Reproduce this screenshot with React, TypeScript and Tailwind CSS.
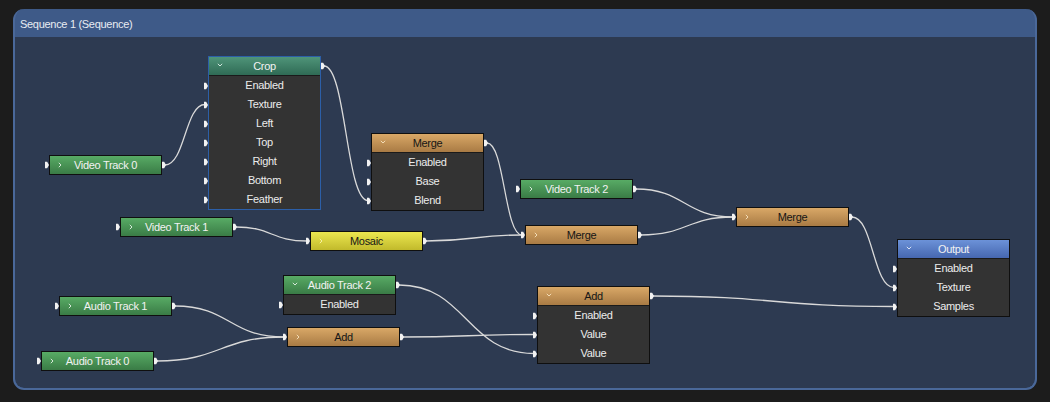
import React from 'react';

type Kind = 'green' | 'orange' | 'yellow' | 'teal' | 'blue';

interface GraphNode {
  id: string;
  title: string;
  kind: Kind;
  x: number;
  y: number;
  rows?: string[];
  noOutput?: boolean;
  selected?: boolean;
}

// canvas origin in page coords (inside the panel body)
const ORIGIN = { x: 15, y: 37 };
const NODE_W = 113;

const NODES: GraphNode[] = [
  { id: 'crop', title: 'Crop', kind: 'teal', x: 208, y: 56, rows: ['Enabled', 'Texture', 'Left', 'Top', 'Right', 'Bottom', 'Feather'], selected: true },
  { id: 'vt0', title: 'Video Track 0', kind: 'green', x: 49, y: 155 },
  { id: 'merge1', title: 'Merge', kind: 'orange', x: 371, y: 133, rows: ['Enabled', 'Base', 'Blend'] },
  { id: 'vt2', title: 'Video Track 2', kind: 'green', x: 520, y: 179 },
  { id: 'vt1', title: 'Video Track 1', kind: 'green', x: 120, y: 217 },
  { id: 'mosaic', title: 'Mosaic', kind: 'yellow', x: 310, y: 231 },
  { id: 'merge2', title: 'Merge', kind: 'orange', x: 525, y: 225 },
  { id: 'merge3', title: 'Merge', kind: 'orange', x: 736, y: 207 },
  { id: 'output', title: 'Output', kind: 'blue', x: 897, y: 239, rows: ['Enabled', 'Texture', 'Samples'], noOutput: true },
  { id: 'at2', title: 'Audio Track 2', kind: 'green', x: 283, y: 275, rows: ['Enabled'] },
  { id: 'at1', title: 'Audio Track 1', kind: 'green', x: 59, y: 296 },
  { id: 'add1', title: 'Add', kind: 'orange', x: 287, y: 327 },
  { id: 'at0', title: 'Audio Track 0', kind: 'green', x: 41, y: 351 },
  { id: 'add2', title: 'Add', kind: 'orange', x: 537, y: 286, rows: ['Enabled', 'Value', 'Value'] },
];

// [from, to, input row index (undefined = collapsed node header)]
const EDGES: [string, string, number?][] = [
  ['vt0', 'crop', 1],
  ['crop', 'merge1', 2],
  ['merge1', 'merge2'],
  ['vt1', 'mosaic'],
  ['mosaic', 'merge2'],
  ['vt2', 'merge3'],
  ['merge2', 'merge3'],
  ['merge3', 'output', 1],
  ['at1', 'add1'],
  ['at0', 'add1'],
  ['at2', 'add2', 2],
  ['add1', 'add2', 1],
  ['add2', 'output', 2],
];

const headerStyles: Record<Kind, string> = {
  green: 'bg-linear-to-b from-[#58ab65] to-[#3a7c46] text-[#f2f2f2]',
  orange: 'bg-linear-to-b from-[#d9a867] to-[#a97b44] text-[#161616]',
  yellow: 'bg-linear-to-b from-[#ece74f] to-[#c1ba2b] text-[#161616]',
  teal: 'bg-linear-to-b from-[#4f9479] to-[#2f6b55] text-[#f2f2f2]',
  blue: 'bg-linear-to-b from-[#6c92d8] to-[#4667b0] text-[#f2f2f2]',
};

const chevronColor: Record<Kind, string> = {
  green: '#d6e8d8',
  orange: '#f3dcb6',
  yellow: '#f6f0a0',
  teal: '#d2e6de',
  blue: '#dbe4f6',
};

const byId = (id: string) => NODES.find((n) => n.id === id)!;

const outPoint = (n: GraphNode) => ({ x: n.x + NODE_W + 3 - ORIGIN.x, y: n.y + 10 - ORIGIN.y });
const inPoint = (n: GraphNode, row?: number) => ({
  x: n.x - 3 - ORIGIN.x,
  y: (row === undefined ? n.y + 10 : n.y + 20 + row * 19 + 9.5) - ORIGIN.y,
});

const Port = ({ side }: { side: 'left' | 'right' }) => (
  <svg
    width="4"
    height="7"
    viewBox="0 0 4 7"
    className={`absolute top-1/2 -translate-y-1/2 z-10 ${side === 'left' ? 'left-[-5px]' : 'right-[-5px]'}`}
  >
    <polygon points="0,0 2,0 4,3.5 2,7 0,7" fill="#f2f2f2" />
  </svg>
);

const Chevron = ({ open, color }: { open: boolean; color: string }) =>
  open ? (
    <svg width="6" height="4" viewBox="0 0 6 4" className="absolute left-[8px] top-[6px]">
      <path d="M0.8 0.8 L3 3 L5.2 0.8" fill="none" stroke={color} strokeWidth="1" />
    </svg>
  ) : (
    <svg width="4" height="6" viewBox="0 0 4 6" className="absolute left-[8px] top-[6px]">
      <path d="M0.8 0.8 L3 3 L0.8 5.2" fill="none" stroke={color} strokeWidth="1" />
    </svg>
  );

const Node = ({ n }: { n: GraphNode }) => {
  const expanded = !!n.rows;
  return (
    <div
      className={`absolute w-[113px] border ${n.selected ? 'border-[#2c5fa8]' : 'border-[#0f0f0f]'}`}
      style={{ left: n.x - ORIGIN.x, top: n.y - ORIGIN.y }}
    >
      <div className={`relative h-[18px] flex items-center justify-center ${headerStyles[n.kind]}`}>
        <Chevron open={expanded} color={chevronColor[n.kind]} />
        <span className="leading-none">{n.title}</span>
        {!expanded && <Port side="left" />}
        {!n.noOutput && <Port side="right" />}
      </div>
      {n.rows && (
        <div className="bg-[#333333] border-t border-[#1a1a1a]">
          {n.rows.map((r, i) => (
            <div key={i} className="relative h-[19px] flex items-center justify-center text-[#ececec]">
              <span className="leading-none">{r}</span>
              <Port side="left" />
            </div>
          ))}
        </div>
      )}
    </div>
  );
};

const Wires = () => (
  <svg className="absolute inset-0 pointer-events-none" width="1020" height="352">
    {EDGES.map(([from, to, row], i) => {
      const a = outPoint(byId(from));
      const b = inPoint(byId(to), row);
      const mx = (a.x + b.x) / 2;
      return (
        <path
          key={i}
          d={`M ${a.x} ${a.y} C ${mx} ${a.y}, ${mx} ${b.y}, ${b.x} ${b.y}`}
          fill="none"
          stroke="#d9d9d9"
          strokeWidth="1.3"
        />
      );
    })}
  </svg>
);

const App: React.FC = () => {
  return (
    <div
      className="w-[1050px] h-[402px] bg-[#1c1c1c] pt-[9px] pl-[13px] text-[11px] tracking-[-0.3px]"
      style={{ fontFamily: '"Liberation Sans", Arial, sans-serif' }}
    >
      <div className="w-[1024px] h-[381px] rounded-[11px] border-2 border-t-0 border-[#4a6899] bg-[#3e5a88] flex flex-col overflow-hidden">
        <div className="h-[28px] flex items-center px-[5px] pt-[2px] text-[#e8ecf2] shrink-0">
          Sequence 1 (Sequence)
        </div>
        <div className="relative flex-1 bg-[#2d3a51] rounded-b-[9px]">
          <Wires />
          {NODES.map((n) => (
            <Node key={n.id} n={n} />
          ))}
        </div>
      </div>
    </div>
  );
};

export default App;
